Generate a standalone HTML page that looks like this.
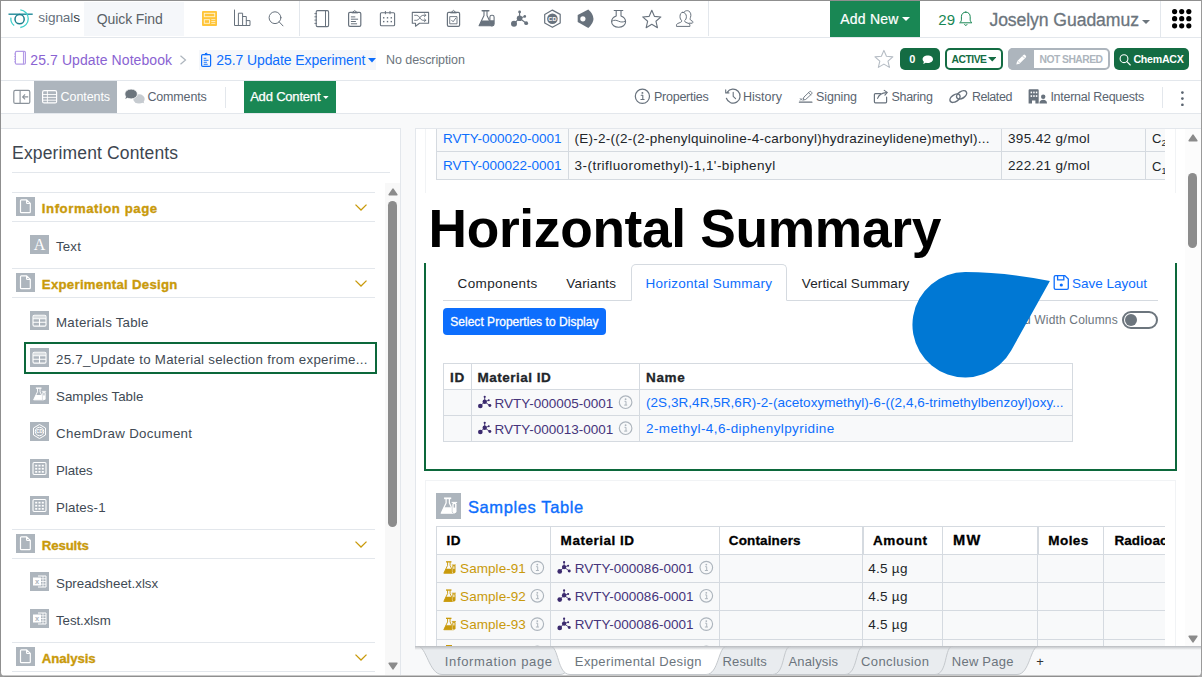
<!DOCTYPE html><html><head><meta charset="utf-8"><title>Signals Notebook</title><style>
html,body{margin:0;padding:0;}body{width:1202px;height:677px;overflow:hidden;position:relative;background:#f8f9fa;font-family:"Liberation Sans", sans-serif;}
.t{position:absolute;white-space:pre;line-height:normal;}

</style></head><body>
<div style="position:absolute;left:0px;top:0px;width:1202px;height:114px;background:#fff"></div>
<div style="position:absolute;left:0px;top:37px;width:1202px;height:1px;background:#e3e7ec"></div>
<div style="position:absolute;left:0px;top:80px;width:1202px;height:1px;background:#e3e7ec"></div>
<div style="position:absolute;left:0px;top:113px;width:1202px;height:1px;background:#e3e7ec"></div>
<div style="position:absolute;left:84px;top:2px;width:100px;height:34px;background:#f5f7fa"></div>
<span class="t" style="left:38.32px;top:10.00px;font-size:13.6px;color:#66707c;font-weight:400;letter-spacing:-0.095px;">signal<span style="color:#30373e">s</span></span>
<span class="t" style="left:96.80px;top:11.00px;font-size:14px;color:#5a6268;font-weight:400;letter-spacing:-0.102px;">Quick Find</span>
<div style="position:absolute;left:299px;top:1px;width:1px;height:35px;background:#e3e7ec"></div>
<div style="position:absolute;left:708px;top:1px;width:1px;height:35px;background:#e3e7ec"></div>
<div style="position:absolute;left:830px;top:1px;width:90px;height:36px;background:#198754"></div>
<span class="t" style="left:840.30px;top:11.00px;font-size:14px;color:#fff;font-weight:400;letter-spacing:0.227px;-webkit-text-stroke:0.2px #fff;">Add New</span>
<svg style="position:absolute;left:902px;top:17px;" width="8" height="4" viewBox="0 0 8 4"><path d="M0 0h8l-4 4z" fill="#fff"/></svg>
<span class="t" style="left:938.25px;top:11.00px;font-size:15px;color:#198754;font-weight:400;letter-spacing:0.256px;">29</span>
<span class="t" style="left:989.42px;top:10.00px;font-size:17.6px;color:#6c757d;font-weight:400;letter-spacing:-0.072px;-webkit-text-stroke:0.3px #6c757d;">Joselyn Guadamuz</span>
<svg style="position:absolute;left:1142px;top:20px;" width="8" height="4" viewBox="0 0 8 4"><path d="M0 0h8l-4 4z" fill="#6c757d"/></svg>
<div style="position:absolute;left:1160px;top:1px;width:1px;height:36px;background:#e3e7ec"></div>
<svg style="position:absolute;left:1171.5px;top:9px;" width="20" height="20" viewBox="0 0 20 20"><circle cx="2.6" cy="2.6" r="2.6" fill="#000"/><circle cx="2.6" cy="9.7" r="2.6" fill="#000"/><circle cx="2.6" cy="16.8" r="2.6" fill="#000"/><circle cx="9.7" cy="2.6" r="2.6" fill="#000"/><circle cx="9.7" cy="9.7" r="2.6" fill="#000"/><circle cx="9.7" cy="16.8" r="2.6" fill="#000"/><circle cx="16.8" cy="2.6" r="2.6" fill="#000"/><circle cx="16.8" cy="9.7" r="2.6" fill="#000"/><circle cx="16.8" cy="16.8" r="2.6" fill="#000"/></svg>
<span class="t" style="left:30.30px;top:52.00px;font-size:14px;color:#8a63d2;font-weight:400;letter-spacing:0.090px;">25.7 Update Notebook</span>
<svg style="position:absolute;left:179px;top:55px;" width="8" height="10" viewBox="0 0 8 10"><path d="M1.5 0.7 L6.5 5 L1.5 9.3" fill="none" stroke="#adb5bd" stroke-width="1.2"/></svg>
<div style="position:absolute;left:199px;top:50px;width:177px;height:20px;background:#f5f7fa"></div>
<span class="t" style="left:216.30px;top:52.00px;font-size:14px;color:#0d6efd;font-weight:400;letter-spacing:-0.095px;">25.7 Update Experiment</span>
<svg style="position:absolute;left:368px;top:58px;" width="8" height="4.5" viewBox="0 0 8 4.5"><path d="M0 0h8l-4 4.5z" fill="#0d6efd"/></svg>
<span class="t" style="left:386.07px;top:53.00px;font-size:12.5px;color:#6c757d;font-weight:400;letter-spacing:-0.083px;">No description</span>
<div style="position:absolute;left:900px;top:48px;width:40px;height:22px;background:#146c43;border-radius:5px"></div>
<span class="t" style="left:909.15px;top:53.00px;font-size:11px;color:#fff;font-weight:700;font-family:"Liberation Serif",serif;">0</span>
<div style="position:absolute;left:945px;top:48px;width:58px;height:22px;box-sizing:border-box;border:2px solid #146c43;border-radius:5px;background:#fff"></div>
<span class="t" style="left:951.49px;top:54.00px;font-size:10.3px;color:#146c43;font-weight:700;letter-spacing:-0.456px;">ACTIVE</span>
<svg style="position:absolute;left:987.5px;top:57px;" width="8.5" height="4.5" viewBox="0 0 8.5 4.5"><path d="M0 0h8.5l-4.25 4.5z" fill="#146c43"/></svg>
<div style="position:absolute;left:1008px;top:48px;width:102px;height:22px;box-sizing:border-box;border:2px solid #adb5bd;border-radius:5px;background:#fff"></div>
<div style="position:absolute;left:1008px;top:48px;width:25.5px;height:22px;background:#adb5bd;border-radius:5px 0 0 5px"></div>
<span class="t" style="left:1039.48px;top:54.00px;font-size:10.3px;color:#adb5bd;font-weight:700;letter-spacing:-0.505px;">NOT SHARED</span>
<div style="position:absolute;left:1114px;top:48px;width:75px;height:22px;background:#146c43;border-radius:5px"></div>
<span class="t" style="left:1133.47px;top:53.00px;font-size:10.6px;color:#fff;font-weight:700;letter-spacing:-0.250px;">ChemACX</span>
<div style="position:absolute;left:34px;top:81px;width:83px;height:32px;background:#adb5bd"></div>
<span class="t" style="left:60.58px;top:90.00px;font-size:12.5px;color:#fff;font-weight:400;letter-spacing:-0.085px;">Contents</span>
<span class="t" style="left:147.38px;top:90.00px;font-size:12.5px;color:#5a6470;font-weight:400;letter-spacing:-0.148px;">Comments</span>
<div style="position:absolute;left:225px;top:87px;width:1px;height:21px;background:#e3e7ec"></div>
<div style="position:absolute;left:244px;top:81px;width:92px;height:32px;background:#198754"></div>
<span class="t" style="left:250.15px;top:89.00px;font-size:13px;color:#fff;font-weight:400;letter-spacing:-0.189px;-webkit-text-stroke:0.25px #fff;">Add Content</span>
<svg style="position:absolute;left:323.3px;top:96px;" width="5.6" height="3" viewBox="0 0 5.6 3"><path d="M0 0h5.6l-2.8 3z" fill="#fff"/></svg>
<span class="t" style="left:653.88px;top:90.00px;font-size:12.5px;color:#5a6470;font-weight:400;letter-spacing:-0.223px;">Properties</span>
<span class="t" style="left:743.08px;top:90.00px;font-size:12.5px;color:#5a6470;font-weight:400;letter-spacing:-0.008px;">History</span>
<span class="t" style="left:816.08px;top:90.00px;font-size:12.5px;color:#5a6470;font-weight:400;letter-spacing:-0.122px;">Signing</span>
<span class="t" style="left:891.38px;top:90.00px;font-size:12.5px;color:#5a6470;font-weight:400;letter-spacing:-0.263px;">Sharing</span>
<span class="t" style="left:971.88px;top:90.00px;font-size:12.5px;color:#5a6470;font-weight:400;letter-spacing:-0.435px;">Related</span>
<span class="t" style="left:1050.38px;top:90.00px;font-size:12.5px;color:#5a6470;font-weight:400;letter-spacing:-0.261px;">Internal Requests</span>
<div style="position:absolute;left:1162px;top:87px;width:1px;height:21px;background:#e3e7ec"></div>
<svg style="position:absolute;left:1180px;top:90px;" width="5" height="16" viewBox="0 0 5 16"><circle cx="2.4" cy="2.6" r="1.35" fill="#5a6470"/><circle cx="2.4" cy="8.6" r="1.35" fill="#5a6470"/><circle cx="2.4" cy="14.8" r="1.35" fill="#5a6470"/></svg>
<div style="position:absolute;left:1px;top:128px;width:400px;height:549px;box-sizing:border-box;background:#fff;border:1px solid #e3e7ec;border-left:none"></div>
<span class="t" style="left:12.12px;top:143.00px;font-size:17.5px;color:#3d4650;font-weight:400;letter-spacing:0.138px;">Experiment Contents</span>
<div style="position:absolute;left:12px;top:172px;width:378px;height:1px;background:#e3e7ec"></div>
<div style="position:absolute;left:12px;top:192px;width:363px;height:1px;background:#e3e7ec"></div>
<div style="position:absolute;left:16px;top:197px;width:19px;height:19px;background:#adb5bd"></div>
<svg style="position:absolute;left:16px;top:197px;" width="19" height="19" viewBox="0 0 19 19"><path d="M5.4 2.8h5.3l3.6 3.6v8.3a0.9 0.9 0 0 1-0.9 0.9h-8a0.9 0.9 0 0 1-0.9-0.9v-11a0.9 0.9 0 0 1 0.9-0.9z M10.6 2.9v2.7a0.9 0.9 0 0 0 0.9 0.9h2.7" fill="none" stroke="#fff" stroke-width="1.2" stroke-linejoin="round"/></svg>
<span class="t" style="left:41.84px;top:201.00px;font-size:13.2px;color:#c99a0b;font-weight:700;letter-spacing:0.553px;-webkit-text-stroke:0.35px #c99a0b;">Information page</span>
<svg style="position:absolute;left:355px;top:204px;" width="12" height="7" viewBox="0 0 12 7"><path d="M0.5 0.6 L6 6 L11.5 0.6" fill="none" stroke="#c99a0b" stroke-width="1.3"/></svg>
<div style="position:absolute;left:12px;top:221px;width:363px;height:1px;background:#e3e7ec"></div>
<div style="position:absolute;left:30px;top:235px;width:19px;height:19px;background:#adb5bd"></div>
<svg style="position:absolute;left:30px;top:235px;" width="19" height="19" viewBox="0 0 19 19"><text x="9.5" y="15" text-anchor="middle" font-family="Liberation Serif,serif" font-size="16" fill="#fff">A</text></svg>
<span class="t" style="left:56.04px;top:239.00px;font-size:13.3px;color:#414a54;font-weight:400;letter-spacing:0.135px;">Text</span>
<div style="position:absolute;left:12px;top:268px;width:363px;height:1px;background:#e3e7ec"></div>
<div style="position:absolute;left:16px;top:273px;width:19px;height:19px;background:#adb5bd"></div>
<svg style="position:absolute;left:16px;top:273px;" width="19" height="19" viewBox="0 0 19 19"><path d="M5.4 2.8h5.3l3.6 3.6v8.3a0.9 0.9 0 0 1-0.9 0.9h-8a0.9 0.9 0 0 1-0.9-0.9v-11a0.9 0.9 0 0 1 0.9-0.9z M10.6 2.9v2.7a0.9 0.9 0 0 0 0.9 0.9h2.7" fill="none" stroke="#fff" stroke-width="1.2" stroke-linejoin="round"/></svg>
<span class="t" style="left:41.84px;top:277.00px;font-size:13.2px;color:#c99a0b;font-weight:700;letter-spacing:0.282px;-webkit-text-stroke:0.35px #c99a0b;">Experimental Design</span>
<svg style="position:absolute;left:355px;top:280px;" width="12" height="7" viewBox="0 0 12 7"><path d="M0.5 0.6 L6 6 L11.5 0.6" fill="none" stroke="#c99a0b" stroke-width="1.3"/></svg>
<div style="position:absolute;left:12px;top:297px;width:363px;height:1px;background:#e3e7ec"></div>
<div style="position:absolute;left:30px;top:311px;width:19px;height:19px;background:#adb5bd"></div>
<svg style="position:absolute;left:30px;top:311px;" width="19" height="19" viewBox="0 0 19 19"><rect x="3" y="4.3" width="13" height="10.8" rx="1.4" fill="none" stroke="#fff" stroke-width="1.1"/><rect x="3.5" y="4.8" width="12" height="2.6" fill="#fff" opacity="0.55"/><path d="M3 7.7h13M3 11.3h13M9.5 7.7v7.4" stroke="#fff" stroke-width="1.1"/></svg>
<span class="t" style="left:56.04px;top:315.00px;font-size:13.3px;color:#414a54;font-weight:400;letter-spacing:0.229px;">Materials Table</span>
<div style="position:absolute;left:24px;top:342px;width:353px;height:32px;box-sizing:border-box;border:2px solid #0c683b"></div>
<div style="position:absolute;left:30px;top:348px;width:19px;height:19px;background:#adb5bd"></div>
<svg style="position:absolute;left:30px;top:348px;" width="19" height="19" viewBox="0 0 19 19"><rect x="3" y="4.3" width="13" height="10.8" rx="1.4" fill="none" stroke="#fff" stroke-width="1.1"/><rect x="3.5" y="4.8" width="12" height="2.6" fill="#fff" opacity="0.55"/><path d="M3 7.7h13M3 11.3h13M9.5 7.7v7.4" stroke="#fff" stroke-width="1.1"/></svg>
<span class="t" style="left:56.04px;top:352.00px;font-size:13.3px;color:#414a54;font-weight:400;letter-spacing:0.275px;">25.7_Update to Material selection from experime...</span>
<div style="position:absolute;left:30px;top:385px;width:19px;height:19px;background:#adb5bd"></div>
<svg style="position:absolute;left:30px;top:385px;" width="19" height="19" viewBox="0 0 19 19"><g transform="translate(3 2.6) scale(0.8)"><path d="M3.6 0.7h7" stroke="#fff" stroke-width="1.7" fill="none"/><path d="M5.6 0.9v4.4L0.8 15.3h12.8L8.8 5.3V0.9" fill="none" stroke="#fff" stroke-width="1.2" stroke-linejoin="round"/><path d="M3.4 9.4h7.6l2.6 5.9h-12.8z" fill="#fff"/><rect x="11.2" y="4.4" width="5" height="11.2" rx="2" fill="#adb5bd"/><rect x="11.7" y="4.8" width="4.1" height="10.6" rx="1.9" fill="#fff"/><path d="M11 4.7h5.4" stroke="#fff" stroke-width="1" fill="none"/><rect x="13" y="6.4" width="1.4" height="3.4" fill="#adb5bd"/></g></svg>
<span class="t" style="left:56.04px;top:389.00px;font-size:13.3px;color:#414a54;font-weight:400;letter-spacing:0.034px;">Samples Table</span>
<div style="position:absolute;left:30px;top:422px;width:19px;height:19px;background:#adb5bd"></div>
<svg style="position:absolute;left:30px;top:422px;" width="19" height="19" viewBox="0 0 19 19"><path d="M9.5 2.5l6 3.5v7l-6 3.5l-6-3.5v-7z" fill="none" stroke="#fff" stroke-width="1"/><circle cx="9.5" cy="9.5" r="4.2" fill="none" stroke="#fff" stroke-width="1"/><text x="9.5" y="11.3" text-anchor="middle" font-family="Liberation Sans,sans-serif" font-size="4.6" font-weight="700" fill="#fff">CD</text></svg>
<span class="t" style="left:56.04px;top:426.00px;font-size:13.3px;color:#414a54;font-weight:400;letter-spacing:0.325px;">ChemDraw Document</span>
<div style="position:absolute;left:30px;top:459px;width:19px;height:19px;background:#adb5bd"></div>
<svg style="position:absolute;left:30px;top:459px;" width="19" height="19" viewBox="0 0 19 19"><rect x="3" y="3.5" width="13" height="12" rx="1.2" fill="none" stroke="#fff" stroke-width="1.1"/><rect x="5.2" y="5.8" width="2" height="1.7" fill="#fff"/><rect x="5.2" y="8.9" width="2" height="1.7" fill="#fff"/><rect x="5.2" y="12.0" width="2" height="1.7" fill="#fff"/><rect x="8.5" y="5.8" width="2" height="1.7" fill="#fff"/><rect x="8.5" y="8.9" width="2" height="1.7" fill="#fff"/><rect x="8.5" y="12.0" width="2" height="1.7" fill="#fff"/><rect x="11.8" y="5.8" width="2" height="1.7" fill="#fff"/><rect x="11.8" y="8.9" width="2" height="1.7" fill="#fff"/><rect x="11.8" y="12.0" width="2" height="1.7" fill="#fff"/></svg>
<span class="t" style="left:56.04px;top:463.00px;font-size:13.3px;color:#414a54;font-weight:400;letter-spacing:-0.056px;">Plates</span>
<div style="position:absolute;left:30px;top:496px;width:19px;height:19px;background:#adb5bd"></div>
<svg style="position:absolute;left:30px;top:496px;" width="19" height="19" viewBox="0 0 19 19"><rect x="3" y="3.5" width="13" height="12" rx="1.2" fill="none" stroke="#fff" stroke-width="1.1"/><rect x="5.2" y="5.8" width="2" height="1.7" fill="#fff"/><rect x="5.2" y="8.9" width="2" height="1.7" fill="#fff"/><rect x="5.2" y="12.0" width="2" height="1.7" fill="#fff"/><rect x="8.5" y="5.8" width="2" height="1.7" fill="#fff"/><rect x="8.5" y="8.9" width="2" height="1.7" fill="#fff"/><rect x="8.5" y="12.0" width="2" height="1.7" fill="#fff"/><rect x="11.8" y="5.8" width="2" height="1.7" fill="#fff"/><rect x="11.8" y="8.9" width="2" height="1.7" fill="#fff"/><rect x="11.8" y="12.0" width="2" height="1.7" fill="#fff"/></svg>
<span class="t" style="left:56.04px;top:500.00px;font-size:13.3px;color:#414a54;font-weight:400;letter-spacing:0.106px;">Plates-1</span>
<div style="position:absolute;left:12px;top:529px;width:363px;height:1px;background:#e3e7ec"></div>
<div style="position:absolute;left:16px;top:534px;width:19px;height:19px;background:#adb5bd"></div>
<svg style="position:absolute;left:16px;top:534px;" width="19" height="19" viewBox="0 0 19 19"><path d="M5.4 2.8h5.3l3.6 3.6v8.3a0.9 0.9 0 0 1-0.9 0.9h-8a0.9 0.9 0 0 1-0.9-0.9v-11a0.9 0.9 0 0 1 0.9-0.9z M10.6 2.9v2.7a0.9 0.9 0 0 0 0.9 0.9h2.7" fill="none" stroke="#fff" stroke-width="1.2" stroke-linejoin="round"/></svg>
<span class="t" style="left:41.84px;top:538.00px;font-size:13.2px;color:#c99a0b;font-weight:700;letter-spacing:-0.117px;-webkit-text-stroke:0.35px #c99a0b;">Results</span>
<svg style="position:absolute;left:355px;top:541px;" width="12" height="7" viewBox="0 0 12 7"><path d="M0.5 0.6 L6 6 L11.5 0.6" fill="none" stroke="#c99a0b" stroke-width="1.3"/></svg>
<div style="position:absolute;left:12px;top:558px;width:363px;height:1px;background:#e3e7ec"></div>
<div style="position:absolute;left:30px;top:572px;width:19px;height:19px;background:#adb5bd"></div>
<svg style="position:absolute;left:30px;top:572px;" width="19" height="19" viewBox="0 0 19 19"><path d="M8 4h8v11h-8" fill="none" stroke="#fff" stroke-width="1"/><path d="M10 6.8h6M10 9.5h6M10 12.2h6M13 4v11" stroke="#fff" stroke-width="0.8"/><rect x="3" y="5.5" width="8" height="8" fill="#fff"/><text x="7" y="12.3" text-anchor="middle" font-family="Liberation Sans,sans-serif" font-size="7.5" font-weight="700" fill="#adb5bd">x</text></svg>
<span class="t" style="left:56.04px;top:576.00px;font-size:13.3px;color:#414a54;font-weight:400;letter-spacing:0.008px;">Spreadsheet.xlsx</span>
<div style="position:absolute;left:30px;top:609px;width:19px;height:19px;background:#adb5bd"></div>
<svg style="position:absolute;left:30px;top:609px;" width="19" height="19" viewBox="0 0 19 19"><path d="M8 4h8v11h-8" fill="none" stroke="#fff" stroke-width="1"/><path d="M10 6.8h6M10 9.5h6M10 12.2h6M13 4v11" stroke="#fff" stroke-width="0.8"/><rect x="3" y="5.5" width="8" height="8" fill="#fff"/><text x="7" y="12.3" text-anchor="middle" font-family="Liberation Sans,sans-serif" font-size="7.5" font-weight="700" fill="#adb5bd">x</text></svg>
<span class="t" style="left:56.04px;top:613.00px;font-size:13.3px;color:#414a54;font-weight:400;letter-spacing:-0.088px;">Test.xlsm</span>
<div style="position:absolute;left:12px;top:642px;width:363px;height:1px;background:#e3e7ec"></div>
<div style="position:absolute;left:16px;top:647px;width:19px;height:19px;background:#adb5bd"></div>
<svg style="position:absolute;left:16px;top:647px;" width="19" height="19" viewBox="0 0 19 19"><path d="M5.4 2.8h5.3l3.6 3.6v8.3a0.9 0.9 0 0 1-0.9 0.9h-8a0.9 0.9 0 0 1-0.9-0.9v-11a0.9 0.9 0 0 1 0.9-0.9z M10.6 2.9v2.7a0.9 0.9 0 0 0 0.9 0.9h2.7" fill="none" stroke="#fff" stroke-width="1.2" stroke-linejoin="round"/></svg>
<span class="t" style="left:41.84px;top:651.00px;font-size:13.2px;color:#c99a0b;font-weight:700;letter-spacing:-0.054px;-webkit-text-stroke:0.35px #c99a0b;">Analysis</span>
<svg style="position:absolute;left:355px;top:654px;" width="12" height="7" viewBox="0 0 12 7"><path d="M0.5 0.6 L6 6 L11.5 0.6" fill="none" stroke="#c99a0b" stroke-width="1.3"/></svg>
<div style="position:absolute;left:12px;top:671px;width:363px;height:1px;background:#e3e7ec"></div>
<div style="position:absolute;left:385px;top:183px;width:15px;height:494px;background:#f8f8f8"></div>
<svg style="position:absolute;left:387.5px;top:187.5px;" width="10" height="8" viewBox="0 0 10 8"><path d="M1.2 6.8L5 1.2L8.8 6.8z" fill="#8b8b8b" stroke="#8b8b8b" stroke-width="1.6" stroke-linejoin="round"/></svg>
<div style="position:absolute;left:388px;top:201px;width:9px;height:326px;background:#8c8c8c;border-radius:4.5px"></div>
<svg style="position:absolute;left:387.5px;top:662px;" width="10" height="8" viewBox="0 0 10 8"><path d="M1.2 1.2L5 6.8L8.8 1.2z" fill="#8b8b8b" stroke="#8b8b8b" stroke-width="1.6" stroke-linejoin="round"/></svg>
<div style="position:absolute;left:415px;top:128px;width:786px;height:518px;box-sizing:border-box;background:#fff;border:1px solid #e3e7ec;border-bottom:none"></div>
<div style="position:absolute;left:425px;top:129px;width:1px;height:64px;background:#f1f3f5"></div>
<div style="position:absolute;left:1175px;top:129px;width:1px;height:64px;background:#f1f3f5"></div>
<div style="position:absolute;left:436px;top:129px;width:729px;height:51px;overflow:hidden"><div style="position:absolute;left:0;top:-6px;width:800px;height:57px;background:#f8f9fa;border:1px solid #d5dae0;box-sizing:border-box"></div><div style="position:absolute;left:0;top:22px;width:800px;height:1px;background:#d5dae0"></div><div style="position:absolute;left:132px;top:0;width:1px;height:50px;background:#d5dae0"></div><div style="position:absolute;left:565px;top:0;width:1px;height:50px;background:#d5dae0"></div><div style="position:absolute;left:709px;top:0;width:1px;height:50px;background:#d5dae0"></div></div>
<span class="t" style="left:443.12px;top:131.00px;font-size:13.5px;color:#0d6efd;font-weight:400;letter-spacing:-0.015px;">RVTY-000020-0001</span>
<span class="t" style="left:443.12px;top:158.00px;font-size:13.5px;color:#0d6efd;font-weight:400;letter-spacing:-0.015px;">RVTY-000022-0001</span>
<span class="t" style="left:574.62px;top:131.00px;font-size:13.5px;color:#212529;font-weight:400;letter-spacing:0.237px;">(E)-2-((2-(2-phenylquinoline-4-carbonyl)hydrazineylidene)methyl)...</span>
<span class="t" style="left:574.62px;top:158.00px;font-size:13.5px;color:#212529;font-weight:400;letter-spacing:0.444px;">3-(trifluoromethyl)-1,1'-biphenyl</span>
<span class="t" style="left:1008.03px;top:131.00px;font-size:13.5px;color:#212529;font-weight:400;letter-spacing:0.341px;">395.42 g/mol</span>
<span class="t" style="left:1008.03px;top:158.00px;font-size:13.5px;color:#212529;font-weight:400;letter-spacing:0.341px;">222.21 g/mol</span>
<div style="position:absolute;left:1150px;top:129px;width:14.5px;height:50px;overflow:hidden"><span class="t" style="left:2px;top:2px;font-size:13px;color:#212529">C<sub style="font-size:9px;vertical-align:-3px">20</sub></span><span class="t" style="left:2px;top:29.5px;font-size:13px;color:#212529">C<sub style="font-size:9px;vertical-align:-3px">13</sub></span></div>
<span class="t" style="left:428.50px;top:198.00px;font-size:53.3px;color:#000;font-weight:700;letter-spacing:-0.320px;">Horizontal Summary</span>
<div style="position:absolute;left:424px;top:263px;width:753px;height:208px;box-sizing:border-box;border:2px solid #0c683b;border-top:none"></div>
<div style="position:absolute;left:443px;top:300px;width:715px;height:1px;background:#d5dae0"></div>
<div style="position:absolute;left:631px;top:264px;width:156px;height:37px;box-sizing:border-box;border:1px solid #d5dae0;border-bottom:1px solid #fff;border-radius:5px 5px 0 0;background:#fff"></div>
<span class="t" style="left:457.62px;top:276.00px;font-size:13.5px;color:#212529;font-weight:400;letter-spacing:0.350px;">Components</span>
<span class="t" style="left:566.33px;top:276.00px;font-size:13.5px;color:#212529;font-weight:400;letter-spacing:0.165px;">Variants</span>
<span class="t" style="left:645.62px;top:276.00px;font-size:13.5px;color:#0d6efd;font-weight:400;letter-spacing:0.247px;">Horizontal Summary</span>
<span class="t" style="left:801.83px;top:276.00px;font-size:13.5px;color:#212529;font-weight:400;letter-spacing:0.111px;">Vertical Summary</span>
<span class="t" style="left:1072.12px;top:276.00px;font-size:13.5px;color:#0d6efd;font-weight:400;letter-spacing:-0.028px;">Save Layout</span>
<div style="position:absolute;left:443px;top:308px;width:163px;height:27px;background:#0d6efd;border-radius:4px"></div>
<span class="t" style="left:450.20px;top:315.00px;font-size:12px;color:#fff;font-weight:400;letter-spacing:0.035px;-webkit-text-stroke:0.3px #fff;">Select Properties to Display</span>
<span class="t" style="left:1000.60px;top:313.00px;font-size:12px;color:#6c757d;font-weight:400;letter-spacing:0.171px;">Fixed Width Columns</span>
<div style="position:absolute;left:1122px;top:311px;width:36px;height:18px;box-sizing:border-box;border:2px solid #6c757d;border-radius:9px;background:#fff"></div>
<div style="position:absolute;left:1125.3px;top:314px;width:12px;height:12px;background:#6c757d;border-radius:6px"></div>
<div style="position:absolute;left:443px;top:363px;width:630px;height:79px;box-sizing:border-box;border:1px solid #d5dae0;background:#f8f9fa"></div>
<div style="position:absolute;left:444px;top:364px;width:628px;height:25px;background:#fff"></div>
<div style="position:absolute;left:444px;top:389px;width:628px;height:1px;background:#d5dae0"></div>
<div style="position:absolute;left:444px;top:415px;width:628px;height:1px;background:#d5dae0"></div>
<div style="position:absolute;left:471px;top:364px;width:1px;height:77px;background:#d5dae0"></div>
<div style="position:absolute;left:639px;top:364px;width:1px;height:77px;background:#d5dae0"></div>
<span class="t" style="left:450.12px;top:370.00px;font-size:13.5px;color:#212529;font-weight:700;letter-spacing:0.625px;-webkit-text-stroke:0.3px #212529;">ID</span>
<span class="t" style="left:477.62px;top:370.00px;font-size:13.5px;color:#212529;font-weight:700;letter-spacing:0.479px;-webkit-text-stroke:0.3px #212529;">Material ID</span>
<span class="t" style="left:646.03px;top:370.00px;font-size:13.5px;color:#212529;font-weight:700;letter-spacing:0.642px;-webkit-text-stroke:0.3px #212529;">Name</span>
<span class="t" style="left:494.62px;top:396.00px;font-size:13.5px;color:#45347a;font-weight:400;">RVTY-000005-0001</span>
<span class="t" style="left:494.62px;top:422.00px;font-size:13.5px;color:#45347a;font-weight:400;">RVTY-000013-0001</span>
<span class="t" style="left:646.03px;top:395.00px;font-size:13.5px;color:#0d6efd;font-weight:400;letter-spacing:0.044px;">(2S,3R,4R,5R,6R)-2-(acetoxymethyl)-6-((2,4,6-trimethylbenzoyl)oxy...</span>
<span class="t" style="left:646.03px;top:421.00px;font-size:13.5px;color:#0d6efd;font-weight:400;letter-spacing:0.398px;">2-methyl-4,6-diphenylpyridine</span>
<svg style="position:absolute;left:905px;top:268px;" width="150" height="115" viewBox="0 0 150 115"><path d="M144.9 12.9Q100 4.1 60.2 4.1A52.7 52.7 0 1 0 106.2 82.4Z" fill="#0078d4"/></svg>
<div style="position:absolute;left:425px;top:480px;width:751px;height:1px;background:#f1f3f5"></div>
<div style="position:absolute;left:425px;top:480px;width:1px;height:166px;background:#f1f3f5"></div>
<div style="position:absolute;left:1175px;top:480px;width:1px;height:166px;background:#f1f3f5"></div>
<div style="position:absolute;left:436px;top:493px;width:25px;height:26px;background:#adb5bd"></div>
<span class="t" style="left:467.88px;top:498.00px;font-size:16.5px;color:#0d6efd;font-weight:400;letter-spacing:0.616px;-webkit-text-stroke:0.35px #0d6efd;">Samples Table</span>
<div style="position:absolute;left:436px;top:526px;width:729px;height:120px;overflow:hidden"><div style="position:absolute;left:0;top:0;width:800px;height:140px;box-sizing:border-box;border:1px solid #d5dae0;background:#f8f9fa"></div><div style="position:absolute;left:1px;top:1px;width:800px;height:27px;background:#fff"></div><div style="position:absolute;left:0;top:27.5px;width:800px;height:1px;background:#d5dae0"></div><div style="position:absolute;left:0;top:56px;width:800px;height:1px;background:#d5dae0"></div><div style="position:absolute;left:0;top:84px;width:800px;height:1px;background:#d5dae0"></div><div style="position:absolute;left:0;top:112.5px;width:800px;height:1px;background:#d5dae0"></div><div style="position:absolute;left:114px;top:0;width:1px;height:140px;background:#d5dae0"></div><div style="position:absolute;left:283px;top:0;width:1px;height:140px;background:#d5dae0"></div><div style="position:absolute;left:426px;top:0;width:1px;height:140px;background:#d5dae0"></div><div style="position:absolute;left:506px;top:0;width:1px;height:140px;background:#d5dae0"></div><div style="position:absolute;left:601px;top:0;width:1px;height:140px;background:#d5dae0"></div><div style="position:absolute;left:667px;top:0;width:1px;height:140px;background:#d5dae0"></div><div style="position:absolute;left:427px;top:0;width:1px;height:28px;background:#d5dae0"></div><div style="position:absolute;left:602px;top:0;width:1px;height:28px;background:#d5dae0"></div></div>
<span class="t" style="left:446.52px;top:533.00px;font-size:13.5px;color:#000;font-weight:700;letter-spacing:0.575px;-webkit-text-stroke:0.3px #000;">ID</span>
<span class="t" style="left:560.62px;top:533.00px;font-size:13.5px;color:#000;font-weight:700;letter-spacing:0.524px;-webkit-text-stroke:0.3px #000;">Material ID</span>
<span class="t" style="left:728.83px;top:533.00px;font-size:13.5px;color:#000;font-weight:700;letter-spacing:0.133px;-webkit-text-stroke:0.3px #000;">Containers</span>
<span class="t" style="left:872.93px;top:533.00px;font-size:13.5px;color:#000;font-weight:700;letter-spacing:0.625px;-webkit-text-stroke:0.3px #000;">Amount</span>
<span class="t" style="left:953.07px;top:532.00px;font-size:14.6px;color:#000;font-weight:700;letter-spacing:1.161px;-webkit-text-stroke:0.3px #000;">MW</span>
<span class="t" style="left:1048.33px;top:533.00px;font-size:13.5px;color:#000;font-weight:700;letter-spacing:0.417px;-webkit-text-stroke:0.3px #000;">Moles</span>
<div style="position:absolute;left:1110px;top:530px;width:55px;height:20px;overflow:hidden"><span class="t" style="left:4.4px;top:3.2px;font-size:13.5px;font-weight:700;color:#000;letter-spacing:0.1px;-webkit-text-stroke:0.3px #000">Radioactivity</span></div>
<span class="t" style="left:460.12px;top:561.00px;font-size:13.5px;color:#c99a0b;font-weight:400;letter-spacing:0.061px;">Sample-91</span>
<span class="t" style="left:574.73px;top:561.00px;font-size:13.5px;color:#45347a;font-weight:400;letter-spacing:0.010px;">RVTY-000086-0001</span>
<span class="t" style="left:868.33px;top:561.00px;font-size:13.5px;color:#212529;font-weight:400;letter-spacing:0.256px;">4.5 µg</span>
<span class="t" style="left:460.12px;top:589.00px;font-size:13.5px;color:#c99a0b;font-weight:400;letter-spacing:0.061px;">Sample-92</span>
<span class="t" style="left:574.73px;top:589.00px;font-size:13.5px;color:#45347a;font-weight:400;letter-spacing:0.010px;">RVTY-000086-0001</span>
<span class="t" style="left:868.33px;top:589.00px;font-size:13.5px;color:#212529;font-weight:400;letter-spacing:0.256px;">4.5 µg</span>
<span class="t" style="left:460.12px;top:617.00px;font-size:13.5px;color:#c99a0b;font-weight:400;letter-spacing:0.061px;">Sample-93</span>
<span class="t" style="left:574.73px;top:617.00px;font-size:13.5px;color:#45347a;font-weight:400;letter-spacing:0.010px;">RVTY-000086-0001</span>
<span class="t" style="left:868.33px;top:617.00px;font-size:13.5px;color:#212529;font-weight:400;letter-spacing:0.256px;">4.5 µg</span>
<div style="position:absolute;left:446px;top:645px;width:6px;height:1px;background:#c99a0b"></div>
<div style="position:absolute;left:1185px;top:129px;width:16px;height:517px;background:#fcfcfc"></div>
<svg style="position:absolute;left:1187.5px;top:133.5px;" width="10" height="8" viewBox="0 0 10 8"><path d="M1.2 6.8L5 1.2L8.8 6.8z" fill="#8b8b8b" stroke="#8b8b8b" stroke-width="1.6" stroke-linejoin="round"/></svg>
<div style="position:absolute;left:1188px;top:173px;width:9px;height:75px;background:#8c8c8c;border-radius:4.5px"></div>
<svg style="position:absolute;left:1187.5px;top:634.5px;" width="10" height="8" viewBox="0 0 10 8"><path d="M1.2 1.2L5 6.8L8.8 1.2z" fill="#8b8b8b" stroke="#8b8b8b" stroke-width="1.6" stroke-linejoin="round"/></svg>
<svg style="position:absolute;left:0;top:0" width="1202" height="677" viewBox="0 0 1202 677"><defs><clipPath id="tc"><rect x="402" y="646.5" width="800" height="30"/></clipPath></defs><g clip-path="url(#tc)"><path d="M920 646 C929 646 917 674.5 930 674.5 L1017 674.5 C1030 674.5 1030 646 1039 646 Z" fill="#e9ecef" stroke="#c4c8cc" stroke-width="1"/><path d="M830 646 C839 646 827 674.5 840 674.5 L935 674.5 C948 674.5 944 646 953 646 Z" fill="#e9ecef" stroke="#c4c8cc" stroke-width="1"/><path d="M760 646 C769 646 757 674.5 770 674.5 L845 674.5 C858 674.5 855 646 864 646 Z" fill="#e9ecef" stroke="#c4c8cc" stroke-width="1"/><path d="M700 646 C709 646 697 674.5 710 674.5 L772.5 674.5 C785.5 674.5 782 646 791 646 Z" fill="#e9ecef" stroke="#c4c8cc" stroke-width="1"/><path d="M417.5 646 C426.5 646 429 674.5 442 674.5 L560 674.5 C573 674.5 571 646 580 646 Z" fill="#e9ecef" stroke="#c4c8cc" stroke-width="1"/><path d="M550 646 C559 646 557 674.5 570 674.5 L706 674.5 C719 674.5 718 646 727 646 Z" fill="#fff" stroke="#c4c8cc" stroke-width="1"/></g></svg>
<div style="position:absolute;left:415px;top:646px;width:787px;height:4px;background:linear-gradient(#b9bcc0,rgba(200,203,207,0))"></div>
<span class="t" style="left:444.85px;top:654.00px;font-size:13px;color:#6c757d;font-weight:400;letter-spacing:0.639px;">Information page</span>
<span class="t" style="left:574.85px;top:654.00px;font-size:13px;color:#6c757d;font-weight:400;letter-spacing:0.371px;">Experimental Design</span>
<span class="t" style="left:722.55px;top:654.00px;font-size:13px;color:#6c757d;font-weight:400;letter-spacing:0.134px;">Results</span>
<span class="t" style="left:788.55px;top:654.00px;font-size:13px;color:#6c757d;font-weight:400;letter-spacing:0.147px;">Analysis</span>
<span class="t" style="left:861.05px;top:654.00px;font-size:13px;color:#6c757d;font-weight:400;letter-spacing:0.397px;">Conclusion</span>
<span class="t" style="left:951.85px;top:654.00px;font-size:13px;color:#6c757d;font-weight:400;letter-spacing:0.227px;">New Page</span>
<span class="t" style="left:1036.35px;top:654.00px;font-size:13px;color:#333;font-weight:400;">+</span>
<div style="position:absolute;left:0px;top:0px;width:1202px;height:1px;background:#8f8f8f"></div>
<div style="position:absolute;left:0px;top:0px;width:1px;height:677px;background:#8f8f8f"></div>
<div style="position:absolute;left:1201px;top:0px;width:1px;height:677px;background:#9a9a9a"></div>
<div style="position:absolute;left:0px;top:675px;width:1202px;height:1px;background:#c9c9c9"></div>
<div style="position:absolute;left:0px;top:676px;width:1202px;height:1px;background:#8f8f8f"></div>
<svg style="position:absolute;left:0px;top:671px;" width="6" height="6" viewBox="0 0 6 6"><path d="M0 0V6H6A5 5 0 0 1 1 1V0Z" fill="#9a9a9a"/></svg>
<svg style="position:absolute;left:1196px;top:671px;" width="6" height="6" viewBox="0 0 6 6"><path d="M6 0V6H0A5 5 0 0 0 5 1V0Z" fill="#a5a5a5"/></svg>
<svg style="position:absolute;left:0;top:0" width="1202" height="80" viewBox="0 0 1202 80"><path d="M8.5 14.2H32.7" stroke="#1f8a99" stroke-width="1.4" fill="none"/><circle cx="19.6" cy="19.2" r="4.6" fill="none" stroke="#1b7f8c" stroke-width="1.5"/><path d="M20.3 9.8A8.9 8.9 0 0 1 20.3 27.5" fill="none" stroke="#3fcfcb" stroke-width="1.3"/><path d="M10.9 17.6A8.9 8.9 0 0 0 14.2 25.6" fill="none" stroke="#3fcfcb" stroke-width="1.3"/><rect x="202" y="11" width="15" height="15" rx="1" fill="#ffc53a"/><rect x="204.3" y="13.3" width="10.4" height="3.4" fill="none" stroke="#fff5d6" stroke-width="0.9"/><rect x="204.3" y="19.7" width="5.2" height="3.6" fill="none" stroke="#fff5d6" stroke-width="0.9"/><path d="M211.3 19.6h4M211.3 21.5h4M211.3 23.4h4" stroke="#fff5d6" stroke-width="0.8" fill="none"/><path d="M234.5 10V25.5H250V20.6H246.3V25.5M246.3 20.6V16.5H242.6V25.5M242.6 16.5V13.2H238.4V25.5" fill="none" stroke="#68727d" stroke-width="1" stroke-linecap="round" stroke-linejoin="round" /><circle cx="275" cy="17.7" r="5.9" fill="none" stroke="#68727d" stroke-width="1" stroke-linecap="round" stroke-linejoin="round" /><path d="M279.2 21.9L283 25.9" fill="none" stroke="#68727d" stroke-width="1" stroke-linecap="round" stroke-linejoin="round" /><rect x="316.2" y="10.6" width="12.4" height="16" rx="1.3" fill="none" stroke="#68727d" stroke-width="1.1" stroke-linecap="round" stroke-linejoin="round" /><path d="M325.5 10.6V26.6" fill="none" stroke="#68727d" stroke-width="1" stroke-linecap="round" stroke-linejoin="round" /><path d="M314.8 13.6h1.8M314.8 16.8h1.8M314.8 20.1h1.8M314.8 23.4h1.8" fill="none" stroke="#68727d" stroke-width="0.9" stroke-linecap="round" stroke-linejoin="round" /><rect x="348.6" y="12.4" width="12.2" height="14" rx="1.3" fill="none" stroke="#68727d" stroke-width="1.2" stroke-linecap="round" stroke-linejoin="round" /><path d="M352.2 12.6L354.7 10.6L357.2 12.6Z" fill="none" stroke="#68727d" stroke-width="1" stroke-linecap="round" stroke-linejoin="round" /><path d="M351.3 16.9h3.6M351.3 19.2h6.4M351.3 21.5h4.2M351.3 23.8h5.4" fill="none" stroke="#68727d" stroke-width="1" stroke-linecap="round" stroke-linejoin="round" /><rect x="380.4" y="12.8" width="14.2" height="13" rx="1" fill="none" stroke="#68727d" stroke-width="1.1" stroke-linecap="round" stroke-linejoin="round" /><path d="M385.4 11.4v2.4M390 11.4v2.4" fill="none" stroke="#68727d" stroke-width="1" stroke-linecap="round" stroke-linejoin="round" /><rect x="383.0" y="17.1" width="1.4" height="1.4" fill="#68727d"/><rect x="383.0" y="20.900000000000002" width="1.4" height="1.4" fill="#68727d"/><rect x="386.8" y="17.1" width="1.4" height="1.4" fill="#68727d"/><rect x="386.8" y="20.900000000000002" width="1.4" height="1.4" fill="#68727d"/><rect x="390.6" y="17.1" width="1.4" height="1.4" fill="#68727d"/><rect x="390.6" y="20.900000000000002" width="1.4" height="1.4" fill="#68727d"/><path d="M412.3 12.4H428.6V23.2H419.5L415.5 26.2V23.2H412.3Z" fill="none" stroke="#68727d" stroke-width="1.1" stroke-linecap="round" stroke-linejoin="round" /><path d="M414.6 15.3h2.2c2.6 0 3.4 5 6 5h3M414.6 20.3h2.2c2.6 0 3.4-5 6-5h3M424.4 13.9l1.5 1.4l-1.5 1.4M424.4 18.9l1.5 1.4l-1.5 1.4" fill="none" stroke="#68727d" stroke-width="0.9" stroke-linecap="round" stroke-linejoin="round" /><rect x="447.4" y="12.4" width="12.2" height="14" rx="1.3" fill="none" stroke="#68727d" stroke-width="1.2" stroke-linecap="round" stroke-linejoin="round" /><path d="M451 12.6L453.5 10.4L456 12.6Z" fill="none" stroke="#68727d" stroke-width="1" stroke-linecap="round" stroke-linejoin="round"  /><rect x="450.1" y="16.6" width="6.9" height="7.2" fill="none" stroke="#68727d" stroke-width="0.9" stroke-linecap="round" stroke-linejoin="round" /><path d="M451.6 20.2l1.5 1.6l2.6-3.6" fill="none" stroke="#68727d" stroke-width="0.9" stroke-linecap="round" stroke-linejoin="round" /><path d="M482.2 10.7h6.6" fill="none" stroke="#68727d" stroke-width="1.5" stroke-linecap="round" stroke-linejoin="round" /><path d="M484 11v4.4L479.1 25.7h12.8L487 15.4V11" fill="none" stroke="#68727d" stroke-width="1.1" stroke-linecap="round" stroke-linejoin="round" /><path d="M481.4 20.6h8.2l2.3 5.1h-12.8z" fill="#68727d"/><rect x="489.9" y="15.2" width="4.2" height="10.7" rx="1.9" fill="#fff" stroke="#68727d" stroke-width="1.1"/><path d="M489.9 20.3h4.2v3.7a2 2 0 0 1-4.2 0z" fill="#68727d"/><path d="M519.6 18.2V11.8M519.6 18.2L524.7 16.4M519.6 18.2L514 23.7M519.6 18.2L526.2 23.2" fill="none" stroke="#68727d" stroke-width="1.1" stroke-linecap="round" stroke-linejoin="round" /><circle cx="519.6" cy="18.2" r="2.8" fill="#68727d"/><circle cx="519.6" cy="11.9" r="1.4" fill="#68727d"/><circle cx="524.8" cy="16.4" r="1.3" fill="#68727d"/><circle cx="514" cy="23.7" r="3" fill="#68727d"/><circle cx="526.2" cy="23.2" r="1.9" fill="#68727d"/><path d="M552.4 10.1L560.2 14.4V23L552.4 27.3L544.7 23V14.4Z" fill="none" stroke="#68727d" stroke-width="1.2" stroke-linecap="round" stroke-linejoin="round" /><circle cx="552.4" cy="18.7" r="5.3" fill="#68727d"/><text x="552.4" y="20.6" text-anchor="middle" font-family="Liberation Sans,sans-serif" font-weight="700" font-size="5.6" fill="#fff">CD</text><path d="M577.7 15L588.3 9.5Q598.6 18.7 588.3 27.9L577.7 21.9Z" fill="#68727d"/><circle cx="582.9" cy="18.8" r="2.6" fill="#fff"/><path d="M614.2 10.5h8.6" fill="none" stroke="#68727d" stroke-width="1.1" stroke-linecap="round" stroke-linejoin="round" /><path d="M616.2 10.8v5.2c-2.6 0.9-4.6 3.1-4.6 5.8c0 3.2 3.1 5.4 7 5.4s7-2.2 7-5.4c0-2.7-2-4.9-4.6-5.8v-5.2" fill="none" stroke="#68727d" stroke-width="1.1" stroke-linecap="round" stroke-linejoin="round" /><path d="M611.8 21.2c2.4-1.6 4.6-1 6.8 0s4.4 1.2 6.6 0" fill="none" stroke="#68727d" stroke-width="1" stroke-linecap="round" stroke-linejoin="round" /><path d="M651.80 10.30L654.39 16.34L660.93 16.93L655.98 21.26L657.44 27.67L651.80 24.30L646.16 27.67L647.62 21.26L642.67 16.93L649.21 16.34Z" fill="none" stroke="#68727d" stroke-width="1.1" stroke-linecap="round" stroke-linejoin="round" /><path d="M684.5 11.6c1.2-1 2.9-1.3 4.3-0.5c2 1.1 2.6 3.9 1.6 6.6c-0.5 1.3-0.3 2.2 0.6 2.7l1.6 0.9c0.4 0.6 0.3 1.5-0.3 1.9h-3.2" fill="none" stroke="#68727d" stroke-width="1" stroke-linecap="round" stroke-linejoin="round" /><path d="M682.8 12.3c2 0 3.6 1.9 3.6 4.4c0 1.7-0.7 3.2-1.8 4c0 0.8 0.5 1.4 1.3 1.7l3 1.2c0.7 0.3 1 0.9 1 1.6v1.2h-13.4v-1.2c0-0.7 0.3-1.3 1-1.6l3-1.2c0.8-0.3 1.3-0.9 1.3-1.7c-1.1-0.8-1.8-2.3-1.8-4c0-2.5 0.8-4.4 2.8-4.4z" fill="none" stroke="#68727d" stroke-width="1" stroke-linecap="round" stroke-linejoin="round"  /><path d="M965.8 12.1c-2.7 0-4.4 2-4.4 4.6v3.2c0 1.2-0.8 2.1-1.7 2.9h12.2c-0.9-0.8-1.7-1.7-1.7-2.9v-3.2c0-2.6-1.7-4.6-4.4-4.6zM964.6 24.6a1.3 1.3 0 0 0 2.4 0" fill="none" stroke="#198754" stroke-width="1" stroke-linejoin="round" stroke-linecap="round"/><rect x="15.4" y="51.4" width="10" height="12.8" rx="1.2" fill="none" stroke="#b39be6" stroke-width="1.2"/><path d="M23.5 51.4V64.2" stroke="#b39be6" stroke-width="1.1" fill="none"/><path d="M14.2 54h1.4M14.2 56.6h1.4M14.2 59.2h1.4M14.2 61.8h1.4" stroke="#b39be6" stroke-width="0.9" fill="none"/><rect x="201.6" y="54.6" width="9" height="11.8" rx="1.2" fill="none" stroke="#0d6efd" stroke-width="1.2"/><path d="M204.3 54.6L206.1 53L207.9 54.6Z" fill="#0d6efd" stroke="#0d6efd" stroke-width="1"/><path d="M203.7 58.3h2.6M203.7 60.3h4.8M203.7 62.3h3.2M203.7 64.3h4" stroke="#0d6efd" stroke-width="0.9" fill="none"/><path d="M883.90 50.40L886.43 56.32L892.84 56.90L887.99 61.13L889.43 67.40L883.90 64.10L878.37 67.40L879.81 61.13L874.96 56.90L881.37 56.32Z" fill="none" stroke="#b5bcc4" stroke-width="1.1" stroke-linejoin="round"/><path d="M927.8 55.6c2.9 0 5.2 1.6 5.2 3.7s-2.3 3.7-5.2 3.7c-0.7 0-1.4-0.1-2-0.3c-0.9 0.7-1.9 1-3 1.1c0.6-0.6 1-1.3 1.1-2.1c-0.8-0.6-1.3-1.5-1.3-2.4c0-2.1 2.3-3.7 5.2-3.7z" fill="#fff"/><path d="M1016.3 64.4l0.8-3.1l6.3-6.3a1.2 1.2 0 0 1 1.7 0l0.7 0.7a1.2 1.2 0 0 1 0 1.7l-6.3 6.3z" fill="#fff"/><path d="M1022.4 55.9l2.3 2.3" stroke="#adb5bd" stroke-width="0.7"/><path d="M1017.6 61l2 2" stroke="#adb5bd" stroke-width="0.6"/><circle cx="1124" cy="58.7" r="3.9" fill="none" stroke="#fff" stroke-width="1.1"/><path d="M1126.9 61.6L1130.3 65" stroke="#fff" stroke-width="1.1" fill="none" stroke-linecap="round"/></svg>
<svg style="position:absolute;left:0;top:80px" width="1202" height="34" viewBox="0 80 1202 34"><rect x="13.8" y="90.4" width="16" height="13" rx="1.5" fill="none" stroke="#8a929a" stroke-width="1.2"/><path d="M20.1 90.4V103.4" stroke="#8a929a" stroke-width="1.1"/><path d="M28.2 96.9H22.6M25.1 94.4L22.6 96.9L25.1 99.4" fill="none" stroke="#8a929a" stroke-width="1.1"/><rect x="42.6" y="90.7" width="14" height="12.2" rx="1.5" fill="none" stroke="#fff" stroke-width="1.2"/><path d="M47.4 90.7V102.9M42.6 94.5H56.6M42.6 97.4H56.6M42.6 100.2H56.6" stroke="#fff" stroke-width="0.9" fill="none"/><ellipse cx="139" cy="98.9" rx="5.7" ry="4.6" fill="#c6cbd0"/><path d="M141.5 102l2.8 1.6l-1-2.8z" fill="#c6cbd0"/><ellipse cx="131.1" cy="94" rx="6.3" ry="4.9" fill="#6c757d" stroke="#fff" stroke-width="0.8"/><path d="M128 97.5l-2.8 1.6l1.2-3z" fill="#6c757d"/><circle cx="642.4" cy="96.3" r="7.1" fill="none" stroke="#68727d" stroke-width="1.2" stroke-linecap="round" stroke-linejoin="round" /><circle cx="642.4" cy="92.9" r="0.95" fill="#68727d"/><path d="M641.2 95.3h1.6v4M640.9 99.5h3.2" fill="none" stroke="#68727d" stroke-width="1.1" stroke-linecap="round" stroke-linejoin="round" /><path d="M727.2 92.3A7 7 0 1 1 726.4 98.3" fill="none" stroke="#68727d" stroke-width="1.2" stroke-linecap="round" stroke-linejoin="round" /><path d="M725.7 89.9V92.9H728.9" fill="none" stroke="#68727d" stroke-width="1.1" stroke-linecap="round" stroke-linejoin="round" /><path d="M733.2 92.2V96.4L735.6 98.6" fill="none" stroke="#68727d" stroke-width="1.1" stroke-linecap="round" stroke-linejoin="round" /><path d="M799.4 102.2H811.9" fill="none" stroke="#68727d" stroke-width="1.2" stroke-linecap="round" stroke-linejoin="round" /><path d="M800.2 98.5l1.8 1.8M802 98.5l-1.8 1.8" fill="none" stroke="#68727d" stroke-width="0.8" stroke-linecap="round" stroke-linejoin="round" /><path d="M803.2 99.7l0.7-2.6l5.7-5.4a1.1 1.1 0 0 1 1.5 0l0.6 0.7a1.1 1.1 0 0 1 0 1.5l-5.7 5.3z" fill="none" stroke="#68727d" stroke-width="0.9" stroke-linecap="round" stroke-linejoin="round" /><path d="M808.6 92.6l2.2 2.3" fill="none" stroke="#68727d" stroke-width="0.8" stroke-linecap="round" stroke-linejoin="round" /><path d="M880.5 93.6H875.4a1 1 0 0 0-1 1V101.8a1 1 0 0 0 1 1H885.6a1 1 0 0 0 1-1V97.2" fill="none" stroke="#68727d" stroke-width="1.2" stroke-linecap="round" stroke-linejoin="round" /><path d="M877.6 98.4c1.2-3.4 4.2-5.6 8.8-5.8" fill="none" stroke="#68727d" stroke-width="1.1" stroke-linecap="round" stroke-linejoin="round" /><path d="M884.2 90.4L887.3 92.4L884.9 95.2" fill="none" stroke="#68727d" stroke-width="1.1" stroke-linecap="round" stroke-linejoin="round" /><g fill="none" stroke="#68727d" stroke-width="1.5" stroke-linecap="round" stroke-linejoin="round" ><ellipse cx="955" cy="98.2" rx="5.6" ry="3.4" transform="rotate(-33 955 98.2)"/><ellipse cx="961.6" cy="94.9" rx="5.6" ry="3.4" transform="rotate(-33 961.6 94.9)"/></g><path d="M1028.6 90.2a1 1 0 0 1 1-1H1037.7a1 1 0 0 1 1 1V103.4H1035.4V100.4H1032V103.4H1028.6Z" fill="#68727d"/><rect x="1030.6" y="91.6" width="1.5" height="1.7" fill="#fff"/><rect x="1030.6" y="95.19999999999999" width="1.5" height="1.7" fill="#fff"/><rect x="1033.1999999999998" y="91.6" width="1.5" height="1.7" fill="#fff"/><rect x="1033.1999999999998" y="95.19999999999999" width="1.5" height="1.7" fill="#fff"/><rect x="1035.8" y="91.6" width="1.5" height="1.7" fill="#fff"/><rect x="1035.8" y="95.19999999999999" width="1.5" height="1.7" fill="#fff"/><circle cx="1043.2" cy="96.7" r="2.2" fill="#68727d"/><path d="M1039.4 103.4c0-2.4 1.5-3.6 3.8-3.6s3.8 1.2 3.8 3.6z" fill="#68727d"/></svg>
<svg style="position:absolute;left:415px;top:260px" width="787" height="386" viewBox="415 260 787 386"><path d="M484.7 401.7V396.70799999999997M484.7 401.7L488.678 400.296M484.7 401.7L480.332 405.99M484.7 401.7L489.848 405.59999999999997" fill="none" stroke="#3b2a6e" stroke-width="0.86"/><circle cx="484.7" cy="401.7" r="2.18" fill="#3b2a6e"/><circle cx="484.7" cy="396.79" r="1.09" fill="#3b2a6e"/><circle cx="488.76" cy="400.30" r="1.01" fill="#3b2a6e"/><circle cx="480.33" cy="405.99" r="2.34" fill="#3b2a6e"/><circle cx="489.85" cy="405.60" r="1.48" fill="#3b2a6e"/><path d="M484.7 427.7V422.70799999999997M484.7 427.7L488.678 426.296M484.7 427.7L480.332 431.99M484.7 427.7L489.848 431.59999999999997" fill="none" stroke="#3b2a6e" stroke-width="0.86"/><circle cx="484.7" cy="427.7" r="2.18" fill="#3b2a6e"/><circle cx="484.7" cy="422.79" r="1.09" fill="#3b2a6e"/><circle cx="488.76" cy="426.30" r="1.01" fill="#3b2a6e"/><circle cx="480.33" cy="431.99" r="2.34" fill="#3b2a6e"/><circle cx="489.85" cy="431.60" r="1.48" fill="#3b2a6e"/><circle cx="625.6" cy="402.2" r="6.3" fill="none" stroke="#adb5bd" stroke-width="1.15"/><circle cx="625.6" cy="399.2" r="0.9" fill="#adb5bd"/><path d="M624.5 401.3h1.5v3.7M624.2 405.09999999999997h3" fill="none" stroke="#adb5bd" stroke-width="1"/><circle cx="625.6" cy="428.2" r="6.3" fill="none" stroke="#adb5bd" stroke-width="1.15"/><circle cx="625.6" cy="425.2" r="0.9" fill="#adb5bd"/><path d="M624.5 427.3h1.5v3.7M624.2 431.09999999999997h3" fill="none" stroke="#adb5bd" stroke-width="1"/><path d="M564.1 567.0999999999999V562.108M564.1 567.0999999999999L568.078 565.6959999999999M564.1 567.0999999999999L559.732 571.3899999999999M564.1 567.0999999999999L569.248 570.9999999999999" fill="none" stroke="#3b2a6e" stroke-width="0.86"/><circle cx="564.1" cy="567.0999999999999" r="2.18" fill="#3b2a6e"/><circle cx="564.1" cy="562.19" r="1.09" fill="#3b2a6e"/><circle cx="568.16" cy="565.70" r="1.01" fill="#3b2a6e"/><circle cx="559.73" cy="571.39" r="2.34" fill="#3b2a6e"/><circle cx="569.25" cy="571.00" r="1.48" fill="#3b2a6e"/><circle cx="537.3" cy="567.5999999999999" r="6.3" fill="none" stroke="#adb5bd" stroke-width="1.15"/><circle cx="537.3" cy="564.5999999999999" r="0.9" fill="#adb5bd"/><path d="M536.1999999999999 566.6999999999999h1.5v3.7M535.9 570.4999999999999h3" fill="none" stroke="#adb5bd" stroke-width="1"/><circle cx="706.3" cy="567.5999999999999" r="6.3" fill="none" stroke="#adb5bd" stroke-width="1.15"/><circle cx="706.3" cy="564.5999999999999" r="0.9" fill="#adb5bd"/><path d="M705.1999999999999 566.6999999999999h1.5v3.7M704.9 570.4999999999999h3" fill="none" stroke="#adb5bd" stroke-width="1"/><g transform="translate(443.2 561.3) scale(0.78)"><path d="M3.6 0.7h7" stroke="#c99a0b" stroke-width="1.7" fill="none"/><path d="M5.6 0.9v4.4L0.8 15.3h12.8L8.8 5.3V0.9" fill="none" stroke="#c99a0b" stroke-width="1.2" stroke-linejoin="round"/><path d="M3.4 9.4h7.6l2.6 5.9h-12.8z" fill="#c99a0b"/><rect x="11.2" y="4.4" width="5" height="11.2" rx="2" fill="#f8f9fa"/><rect x="11.7" y="4.8" width="4.1" height="10.6" rx="1.9" fill="#c99a0b"/><path d="M11 4.7h5.4" stroke="#c99a0b" stroke-width="1" fill="none"/><rect x="13" y="6.4" width="1.4" height="3.4" fill="#f8f9fa"/></g><path d="M564.1 595.3V590.308M564.1 595.3L568.078 593.896M564.1 595.3L559.732 599.5899999999999M564.1 595.3L569.248 599.1999999999999" fill="none" stroke="#3b2a6e" stroke-width="0.86"/><circle cx="564.1" cy="595.3" r="2.18" fill="#3b2a6e"/><circle cx="564.1" cy="590.39" r="1.09" fill="#3b2a6e"/><circle cx="568.16" cy="593.90" r="1.01" fill="#3b2a6e"/><circle cx="559.73" cy="599.59" r="2.34" fill="#3b2a6e"/><circle cx="569.25" cy="599.20" r="1.48" fill="#3b2a6e"/><circle cx="537.3" cy="595.8" r="6.3" fill="none" stroke="#adb5bd" stroke-width="1.15"/><circle cx="537.3" cy="592.8" r="0.9" fill="#adb5bd"/><path d="M536.1999999999999 594.9h1.5v3.7M535.9 598.6999999999999h3" fill="none" stroke="#adb5bd" stroke-width="1"/><circle cx="706.3" cy="595.8" r="6.3" fill="none" stroke="#adb5bd" stroke-width="1.15"/><circle cx="706.3" cy="592.8" r="0.9" fill="#adb5bd"/><path d="M705.1999999999999 594.9h1.5v3.7M704.9 598.6999999999999h3" fill="none" stroke="#adb5bd" stroke-width="1"/><g transform="translate(443.2 589.5) scale(0.78)"><path d="M3.6 0.7h7" stroke="#c99a0b" stroke-width="1.7" fill="none"/><path d="M5.6 0.9v4.4L0.8 15.3h12.8L8.8 5.3V0.9" fill="none" stroke="#c99a0b" stroke-width="1.2" stroke-linejoin="round"/><path d="M3.4 9.4h7.6l2.6 5.9h-12.8z" fill="#c99a0b"/><rect x="11.2" y="4.4" width="5" height="11.2" rx="2" fill="#f8f9fa"/><rect x="11.7" y="4.8" width="4.1" height="10.6" rx="1.9" fill="#c99a0b"/><path d="M11 4.7h5.4" stroke="#c99a0b" stroke-width="1" fill="none"/><rect x="13" y="6.4" width="1.4" height="3.4" fill="#f8f9fa"/></g><path d="M564.1 623.5999999999999V618.608M564.1 623.5999999999999L568.078 622.1959999999999M564.1 623.5999999999999L559.732 627.8899999999999M564.1 623.5999999999999L569.248 627.4999999999999" fill="none" stroke="#3b2a6e" stroke-width="0.86"/><circle cx="564.1" cy="623.5999999999999" r="2.18" fill="#3b2a6e"/><circle cx="564.1" cy="618.69" r="1.09" fill="#3b2a6e"/><circle cx="568.16" cy="622.20" r="1.01" fill="#3b2a6e"/><circle cx="559.73" cy="627.89" r="2.34" fill="#3b2a6e"/><circle cx="569.25" cy="627.50" r="1.48" fill="#3b2a6e"/><circle cx="537.3" cy="624.0999999999999" r="6.3" fill="none" stroke="#adb5bd" stroke-width="1.15"/><circle cx="537.3" cy="621.0999999999999" r="0.9" fill="#adb5bd"/><path d="M536.1999999999999 623.1999999999999h1.5v3.7M535.9 626.9999999999999h3" fill="none" stroke="#adb5bd" stroke-width="1"/><circle cx="706.3" cy="624.0999999999999" r="6.3" fill="none" stroke="#adb5bd" stroke-width="1.15"/><circle cx="706.3" cy="621.0999999999999" r="0.9" fill="#adb5bd"/><path d="M705.1999999999999 623.1999999999999h1.5v3.7M704.9 626.9999999999999h3" fill="none" stroke="#adb5bd" stroke-width="1"/><g transform="translate(443.2 617.8) scale(0.78)"><path d="M3.6 0.7h7" stroke="#c99a0b" stroke-width="1.7" fill="none"/><path d="M5.6 0.9v4.4L0.8 15.3h12.8L8.8 5.3V0.9" fill="none" stroke="#c99a0b" stroke-width="1.2" stroke-linejoin="round"/><path d="M3.4 9.4h7.6l2.6 5.9h-12.8z" fill="#c99a0b"/><rect x="11.2" y="4.4" width="5" height="11.2" rx="2" fill="#f8f9fa"/><rect x="11.7" y="4.8" width="4.1" height="10.6" rx="1.9" fill="#c99a0b"/><path d="M11 4.7h5.4" stroke="#c99a0b" stroke-width="1" fill="none"/><rect x="13" y="6.4" width="1.4" height="3.4" fill="#f8f9fa"/></g><path d="M564.1 651.9V646.908M564.1 651.9L568.078 650.496M564.1 651.9L559.732 656.1899999999999M564.1 651.9L569.248 655.8" fill="none" stroke="#3b2a6e" stroke-width="0.86"/><circle cx="564.1" cy="651.9" r="2.18" fill="#3b2a6e"/><circle cx="564.1" cy="646.99" r="1.09" fill="#3b2a6e"/><circle cx="568.16" cy="650.50" r="1.01" fill="#3b2a6e"/><circle cx="559.73" cy="656.19" r="2.34" fill="#3b2a6e"/><circle cx="569.25" cy="655.80" r="1.48" fill="#3b2a6e"/><circle cx="537.3" cy="652.4" r="6.3" fill="none" stroke="#adb5bd" stroke-width="1.15"/><circle cx="537.3" cy="649.4" r="0.9" fill="#adb5bd"/><path d="M536.1999999999999 651.5h1.5v3.7M535.9 655.3h3" fill="none" stroke="#adb5bd" stroke-width="1"/><circle cx="706.3" cy="652.4" r="6.3" fill="none" stroke="#adb5bd" stroke-width="1.15"/><circle cx="706.3" cy="649.4" r="0.9" fill="#adb5bd"/><path d="M705.1999999999999 651.5h1.5v3.7M704.9 655.3h3" fill="none" stroke="#adb5bd" stroke-width="1"/><g transform="translate(443.2 646.1) scale(0.78)"><path d="M3.6 0.7h7" stroke="#c99a0b" stroke-width="1.7" fill="none"/><path d="M5.6 0.9v4.4L0.8 15.3h12.8L8.8 5.3V0.9" fill="none" stroke="#c99a0b" stroke-width="1.2" stroke-linejoin="round"/><path d="M3.4 9.4h7.6l2.6 5.9h-12.8z" fill="#c99a0b"/><rect x="11.2" y="4.4" width="5" height="11.2" rx="2" fill="#f8f9fa"/><rect x="11.7" y="4.8" width="4.1" height="10.6" rx="1.9" fill="#c99a0b"/><path d="M11 4.7h5.4" stroke="#c99a0b" stroke-width="1" fill="none"/><rect x="13" y="6.4" width="1.4" height="3.4" fill="#f8f9fa"/></g><g transform="translate(440.4 497.6) scale(1.02)"><path d="M3.6 0.7h7" stroke="#fff" stroke-width="1.7" fill="none"/><path d="M5.6 0.9v4.4L0.8 15.3h12.8L8.8 5.3V0.9" fill="none" stroke="#fff" stroke-width="1.2" stroke-linejoin="round"/><path d="M3.4 9.4h7.6l2.6 5.9h-12.8z" fill="#fff"/><rect x="11.2" y="4.4" width="5" height="11.2" rx="2" fill="#adb5bd"/><rect x="11.7" y="4.8" width="4.1" height="10.6" rx="1.9" fill="#fff"/><path d="M11 4.7h5.4" stroke="#fff" stroke-width="1" fill="none"/><rect x="13" y="6.4" width="1.4" height="3.4" fill="#adb5bd"/></g><path d="M1055.6 275.6h9.3l3.4 3.4v9a1.4 1.4 0 0 1-1.4 1.4h-11.3a1.4 1.4 0 0 1-1.4-1.4v-11a1.4 1.4 0 0 1 1.4-1.4z" fill="none" stroke="#0d6efd" stroke-width="1.3" stroke-linejoin="round"/><path d="M1057.6 275.8v4h6.2v-4" fill="none" stroke="#0d6efd" stroke-width="1.3"/><circle cx="1061.3" cy="285" r="1.6" fill="#0d6efd"/></svg>
</body></html>
